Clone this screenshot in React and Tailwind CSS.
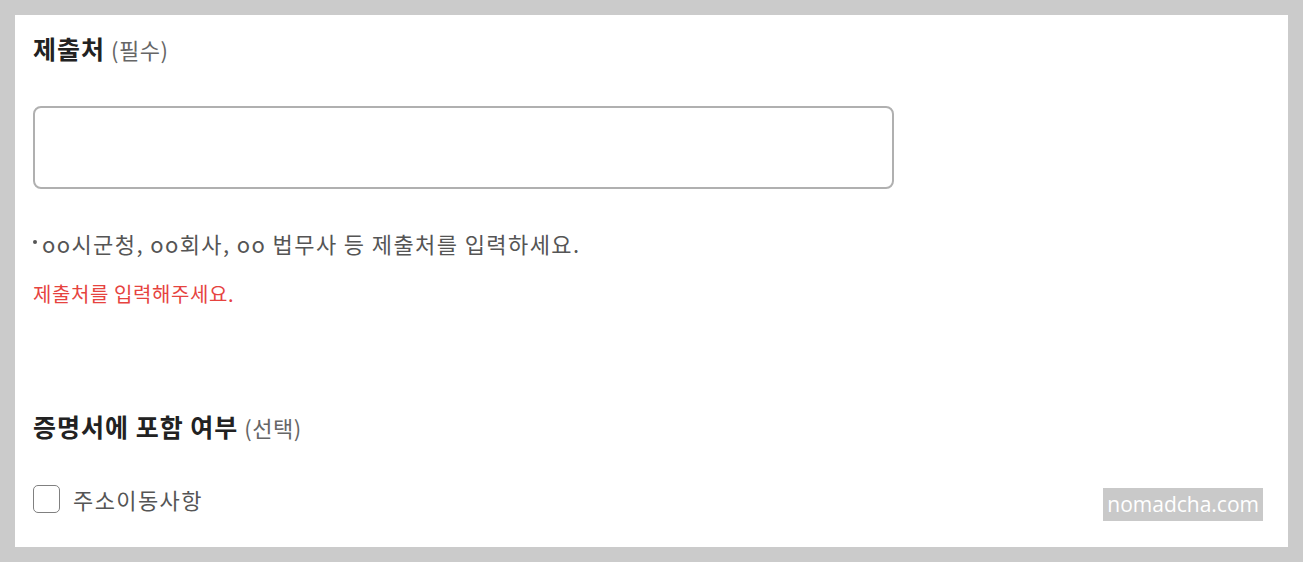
import React from "react";

const kr = { fontFamily: '"Noto Sans CJK KR", "Noto Sans", sans-serif' };

export default function App() {
  return (
    <div className="w-[1303px] h-[562px] bg-[#cbcbcb] p-[15px]" style={kr}>
      <div className="relative h-full bg-white pl-[18px] pr-[18px] pt-[13px]">
        <h2 className="flex items-baseline gap-[6px] leading-[40px]">
          <span className="text-[25px] font-bold text-[#222] tracking-[1px]">제출처</span>
          <span className="text-[22px] text-[#666] tracking-[0.5px]">(필수)</span>
        </h2>

        <input
          type="text"
          className="mt-[37px] block w-[861px] h-[83px] rounded-[8px] border-2 border-[#b0b0b0] bg-white px-4 outline-none"
        />

        <p className="mt-[39px] flex items-center text-[22px] leading-[30px] text-[#555] tracking-[1.4px]">
          <span className="mr-[5px] mb-[2px] inline-block w-[4px] h-[4px] rounded-full bg-[#555]" />
          <span>oo시군청, oo회사, oo 법무사 등 제출처를 입력하세요.</span>
        </p>
        <p className="mt-[24px] text-[20px] leading-[24px] text-[#e6433f] tracking-[0.6px]">
          제출처를 입력해주세요.
        </p>

        <h2 className="mt-[100px] flex items-baseline gap-[6px] leading-[40px]">
          <span className="text-[25px] font-bold text-[#222] tracking-[1px]">증명서에 포함 여부</span>
          <span className="text-[22px] text-[#666] tracking-[0.5px]">(선택)</span>
        </h2>

        <label className="mt-[37px] flex items-center gap-[13px]">
          <span className="block w-[27px] h-[28px] rounded-[5px] border-[1.5px] border-[#808080] bg-white" />
          <span className="text-[22px] text-[#555] leading-[30px] tracking-[1.4px]">주소이동사항</span>
        </label>

        <div
          className="absolute right-[25px] bottom-[26px] bg-[#c9c9c9] px-[4px] h-[33px] flex items-center text-white text-[21px]"
          style={{ fontFamily: '"Open Sans", "Noto Sans", sans-serif' }}
        >
          nomadcha.com
        </div>
      </div>
    </div>
  );
}
